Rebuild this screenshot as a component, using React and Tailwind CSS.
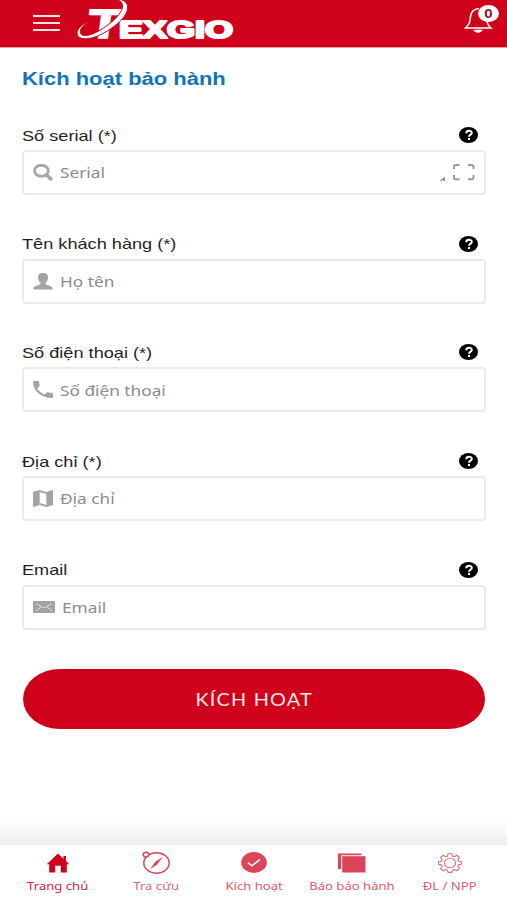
const SearchIcon = () => (
    <svg className="h-[17px] w-5" viewBox="0 0 20 17" fill="none" stroke="#a6a6a6" preserveAspectRatio="none">
        <ellipse cx="8.4" cy="6.8" rx="6.9" ry="5.5" strokeWidth="2.8" />
        <path d="M13.5 11 L17.8 14.8" strokeWidth="3.6" strokeLinecap="round" />
    </svg>
)

const UserIcon = () => (
    <svg className="h-[17px] w-5" viewBox="0 0 20 17" fill="#a3a3a3">
        <path d="M10 0 C6.8 0 5 1.6 5 4.2 C5 6.6 6 8.5 7.4 9.5 V11.2 C6.2 12.3 0.6 12.6 0.3 15.2 V16.6 H19.7 V15.2 C19.4 12.6 13.8 12.3 12.6 11.2 V9.5 C14 8.5 15 6.6 15 4.2 C15 1.6 13.2 0 10 0 Z" />
    </svg>
)

const PhoneIcon = () => (
    <svg className="h-[17px] w-5" viewBox="3 3 18 18" fill="#a3a3a3" preserveAspectRatio="none">
        <path d="M6.62 10.79c1.44 2.83 3.76 5.14 6.59 6.59l2.2-2.2c.27-.27.67-.36 1.02-.24 1.12.37 2.33.57 3.57.57.55 0 1 .45 1 1V20c0 .55-.45 1-1 1-9.39 0-17-7.61-17-17 0-.55.45-1 1-1h3.5c.55 0 1 .45 1 1 0 1.25.2 2.45.57 3.57.11.35.03.74-.25 1.02l-2.2 2.2z" />
    </svg>
)

const MapIcon = () => (
    <svg className="h-[17px] w-5" viewBox="3 3 18 18" fill="#a3a3a3" preserveAspectRatio="none">
        <path d="M20.5 3l-.16.03L15 5.1 9 3 3.36 4.9c-.21.07-.36.25-.36.48V20.5c0 .28.22.5.5.5l.16-.03L9 18.9l6 2.1 5.64-1.9c.21-.07.36-.25.36-.48V3.5c0-.28-.22-.5-.5-.5zM15 19l-6-2.11V5l6 2.11V19z" />
    </svg>
)

const MailIcon = () => (
    <svg className="h-3 w-[22px]" viewBox="0 0 22 12" fill="none">
        <rect width="22" height="12" rx="1.2" fill="#a3a3a3" />
        <path d="M3 2.4 L9.5 6.2 Q11 7 12.5 6.2 L19 2.4 M3 9.8 L8 6 M19 9.8 L14 6" stroke="#ececec" strokeWidth="0.8" />
    </svg>
)

const ScanIcon = () => (
    <svg className="h-[17px] w-[38px]" viewBox="0 0 38 17" fill="none">
        <path d="M1.5 17 L7 12.5 V17 H5.2 V15.6 L3.4 17 Z" fill="#8c8c8c" />
        <path d="M16 5 V2.6 Q16 1 18 1 H21.5 M30 1 H33.5 Q35.5 1 35.5 2.6 V5 M16 11 V13.6 Q16 15.2 18 15.2 H21.5 M30 15.2 H33.5 Q35.5 15.2 35.5 13.6 V11" stroke="#999" strokeWidth="2" />
    </svg>
)

const HelpIcon = () => (
    <span className="flex h-4 w-[19px] items-center justify-center rounded-[50%] bg-black">
        <svg className="h-3 w-3" viewBox="0 0 12 12" fill="none" stroke="#fff" strokeWidth="2">
            <path d="M3.2 4.2 C3.2 1 8.8 1 8.8 3.9 C8.8 5.6 6 5.6 6 7.8 M6 9 V11" />
        </svg>
    </span>
)

const Logo = () => (
    <svg className="h-[47px] w-40" viewBox="0 0 160 47" fill="#fff">
        <g fontFamily="Liberation Sans" fontWeight="bold" stroke="#fff" strokeLinejoin="round">
            <text transform="translate(10 37.8) skewX(-8)" fontSize="41" textLength="34" lengthAdjust="spacingAndGlyphs" strokeWidth="1.6">T</text>
            <text x="43" y="38" fontSize="24" textLength="114" lengthAdjust="spacingAndGlyphs" strokeWidth="2.2">EXGIO</text>
        </g>
        <path d="M39 -1 C58 -1 54 15 38 26.5 C29 33 19 38.5 10 38.8 C0 39 -1 32 4 27 C7 24 10 22.5 14 21 C7 25 2.5 30 5 34 C8 38 20 34 31 25.5 C46 15 53 2 39 -1 Z" stroke="#d0021b" strokeWidth="1" />
    </svg>
)

const HomeIcon = () => (
    <svg className="h-5 w-6" viewBox="0 0 24 20" fill="#d0021b">
        <path d="M12 0.5 L0.7 11.2 H3.2 V19.5 H9.2 V12.8 H14.8 V19.5 H20.8 V11.2 H23.3 L20 8 V3 H17.5 V5.7 Z" />
    </svg>
)

const CompassIcon = () => (
    <svg className="h-[23px] w-7" viewBox="0 0 28 23" fill="none" stroke="#dc4558" strokeWidth="1.5">
        <ellipse cx="14.5" cy="12" rx="12.7" ry="10.2" />
        <ellipse cx="4" cy="3.6" rx="2.8" ry="2.4" fill="#fff" />
        <path d="M19.8 6.8 L15.2 13.2 L9.2 17.2 L13.2 11 Z" fill="#dc4558" strokeWidth="0.5" />
    </svg>
)

const CheckIcon = () => (
    <svg className="h-[21px] w-[26px]" viewBox="0 0 26 21" fill="none">
        <ellipse cx="13" cy="10.5" rx="12.8" ry="10.4" fill="#dc4558" />
        <path d="M7 10.8 L11 13.8 L19 7.4" stroke="#fff" strokeWidth="1.6" />
    </svg>
)

const CardsIcon = () => (
    <svg className="h-5 w-7" viewBox="0 0 28 20" fill="#dc4558">
        <path d="M0 0.5 H23.5 V2.3 H3.2 V16 H0 Z" />
        <rect x="4.2" y="3.2" width="23.3" height="16.3" />
    </svg>
)

const GearIcon = () => (
    <svg className="h-5 w-6" viewBox="0 0 24 20" fill="none" stroke="#e0707d" strokeWidth="1.1" strokeLinejoin="round">
        <path d="M9.5 3.2 L10 0.7 H14 L14.5 3.2 L16.3 3.8 L18.8 2.3 L21.5 4.5 L19.8 6.7 L20.5 8.2 L23.4 8.7 V11.4 L20.5 11.9 L19.8 13.4 L21.5 15.6 L18.8 17.8 L16.3 16.4 L14.5 17 L14 19.4 H10 L9.5 17 L7.7 16.4 L5.2 17.8 L2.5 15.6 L4.2 13.4 L3.5 11.9 L0.6 11.4 V8.7 L3.5 8.2 L4.2 6.7 L2.5 4.5 L5.2 2.3 L7.7 3.8 Z" />
        <ellipse cx="12" cy="10" rx="5.5" ry="4.7" />
    </svg>
)

const fields = [
    { label: "Số serial (*)", placeholder: "Serial", icon: <SearchIcon />, right: <ScanIcon /> },
    { label: "Tên khách hàng (*)", placeholder: "Họ tên", icon: <UserIcon /> },
    { label: "Số điện thoại (*)", placeholder: "Số điện thoại", icon: <PhoneIcon /> },
    { label: "Địa chỉ (*)", placeholder: "Địa chỉ", icon: <MapIcon /> },
    { label: "Email", placeholder: "Email", icon: <MailIcon /> },
]

const menus = [
    { label: "Trang chủ", icon: <HomeIcon />, color: "text-[#d5263b]" },
    { label: "Tra cứu", icon: <CompassIcon />, color: "text-[#e0687a]" },
    { label: "Kích hoạt", icon: <CheckIcon />, color: "text-[#dd5a6b]" },
    { label: "Báo bảo hành", icon: <CardsIcon />, color: "text-[#dd5a6b]" },
    { label: "ĐL / NPP", icon: <GearIcon />, color: "text-[#dd5a6b]" },
]

export default function App() {
    return (
        <div className="flex h-[900px] flex-col overflow-hidden bg-white font-['Liberation_Sans',sans-serif]">
            <header className="flex h-12 shrink-0 items-start border-b border-[#e9a0a8] bg-[#d0021b] pl-[33px] pr-[7px]">
                <div className="mt-[15px] flex w-[27px] flex-col gap-[5px]">
                    <span className="h-[2px] bg-[#ffe5e8]"></span>
                    <span className="h-[2px] bg-[#ffe5e8]"></span>
                    <span className="h-[2px] bg-[#ffe5e8]"></span>
                </div>
                <div className="ml-4"><Logo /></div>
                <div className="relative ml-auto h-[47px] w-9">
                    <svg className="h-[47px] w-9" viewBox="0 0 36 47" fill="none" stroke="#fff" strokeWidth="1.5">
                        <path d="M15 8.5 C8 9 6.5 13 6.3 18 C6.2 23 5 25 1.5 28 H27 C24 25.5 23 23 22.5 20" />
                        <path d="M9.5 30 H18.5 Q17 32.5 14 32.5 Q11 32.5 9.5 30 Z" fill="#fff" strokeWidth="0.5" />
                    </svg>
                    <span className="absolute left-[14px] top-[5px] flex h-[17px] w-[21px] items-center justify-center rounded-[50%] bg-white text-xs font-bold text-[#8f1020]">
                        <span className="scale-x-125">0</span>
                    </span>
                </div>
            </header>

            <main className="flex grow flex-col px-[22px] pt-[19px]">
                <h1 className="flex h-6 items-center text-lg font-bold text-[#1173b8]">
                    <span className="origin-left scale-x-[1.22] whitespace-nowrap">Kích hoạt bảo hành</span>
                </h1>
                <form className="-mr-px mt-[34px] flex flex-col">
                    {fields.map((v, k) => {
                        return <div className="h-[108.7px]" key={k}>
                            <div className="flex h-[25px] items-start justify-between pr-2 pt-[2px]">
                                <label className="-mt-[1.5px] origin-left scale-x-[1.21] whitespace-nowrap text-[15px] leading-5 text-[#1f1f1f]">{v.label}</label>
                                <HelpIcon />
                            </div>
                            <div className="flex h-[45px] items-center rounded-[4px] border-2 border-[#ebebeb] pl-[9px] pr-2">
                                {v.icon}
                                <span className="ml-[7px] origin-left scale-x-[1.15] whitespace-nowrap font-['Noto_Sans',sans-serif] text-[15px] text-[#8b8b8b]">{v.placeholder}</span>
                                <div className="ml-auto">{v.right}</div>
                            </div>
                        </div>
                    })}
                    <button type="button" className="ml-px mr-px mt-px flex h-[60px] items-center justify-center rounded-[37px/30px] bg-[#d0021b] font-[Lato,sans-serif] text-[17px] tracking-[1px] text-[#ffe9eb]">
                        <span className="scale-x-[1.17]">KÍCH HOẠT</span>
                    </button>
                </form>
            </main>

            <div className="h-8 shrink-0 bg-linear-to-b from-white via-[#fafafa] to-[#ededed]"></div>
            <nav className="grid h-[55px] shrink-0 grid-cols-5 bg-white pl-[9px] pr-2">
                {menus.map((v, k) => {
                    return <div className={`flex flex-col items-center ${v.color}`} key={k}>
                        <div className="flex h-[35px] items-center">{v.icon}</div>
                        <span className="scale-x-[1.19] whitespace-nowrap font-['Noto_Sans',sans-serif] text-[11px] leading-3">{v.label}</span>
                    </div>
                })}
            </nav>
        </div>
    )
}
